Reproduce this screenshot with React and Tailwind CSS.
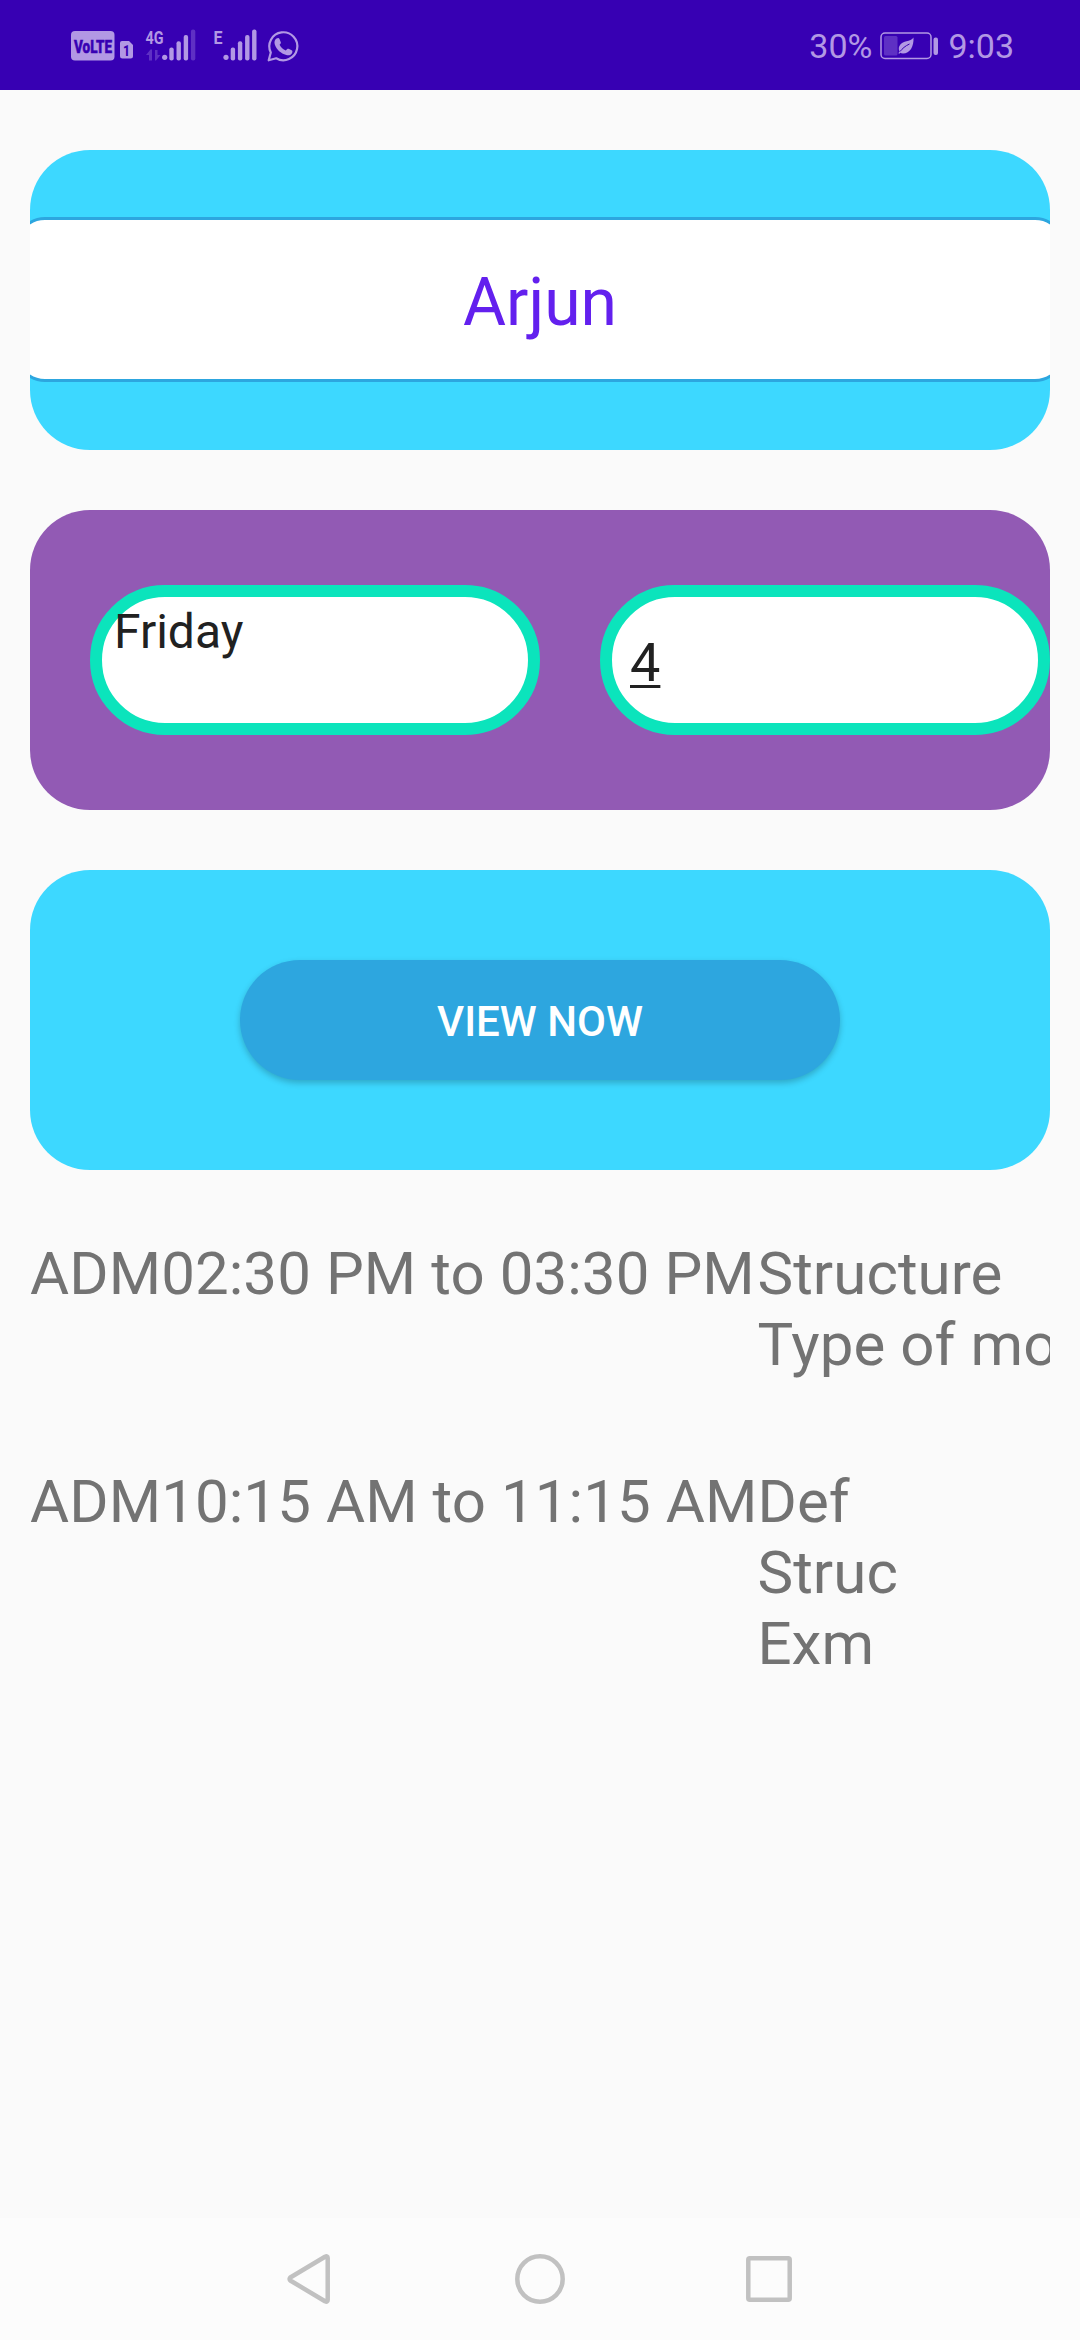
const sessions = [
  { subject: "ADM", time: "02:30 PM to 03:30 PM", topics: ["Structure", "Type of mo"] },
  { subject: "ADM", time: "10:15 AM to 11:15 AM", topics: ["Def", "Struc", "Exm"] },
];

function SignalIcons() {
  return (
    <svg width="270" height="80" viewBox="0 0 270 80" fill="#b298e4" className="block">
      <rect x="21" y="21" width="43.500" height="29.500" rx="4" />
      <text x="24" y="42.500" fontSize="18" fontWeight="800" fill="#3700b3" textLength="38" lengthAdjust="spacingAndGlyphs" stroke="#3700b3" strokeWidth="0.600">VoLTE</text>
      <path d="M72 31h7l4 4v11a2.500 2.500 0 0 1-2.500 2.500h-8a2.500 2.500 0 0 1-2.500-2.500V33a2 2 0 0 1 2-2z" />
      <text x="73" y="46" fontSize="15" fontWeight="800" fill="#3700b3" textLength="7" lengthAdjust="spacingAndGlyphs">1</text>
      <text x="95.500" y="33.500" fontSize="19" fontWeight="700" textLength="18" lengthAdjust="spacingAndGlyphs">4G</text>
      <path d="M96 45l4.500-5.500h1.500v11h-3V45zM105 40h2.500v5h3l-4.500 5.500h-1z" fill="#5e30c4" />
      <circle cx="114.700" cy="47.300" r="2.600" />
      <rect x="119.300" y="37.500" width="4.400" height="13" rx="2" />
      <rect x="126.500" y="31.300" width="4.400" height="19.200" rx="2" />
      <rect x="133.700" y="25" width="4.400" height="25.500" rx="2" />
      <rect x="140.900" y="19.500" width="4.400" height="31" rx="2" fill="#5e30c4" />
      <text x="163.500" y="33.500" fontSize="19" fontWeight="700" textLength="9" lengthAdjust="spacingAndGlyphs">E</text>
      <circle cx="176" cy="47.300" r="2.600" />
      <rect x="180.700" y="37.500" width="4.400" height="13" rx="2" />
      <rect x="187.900" y="31.300" width="4.400" height="19.200" rx="2" />
      <rect x="195.100" y="25" width="4.400" height="25.500" rx="2" />
      <rect x="202.100" y="19.500" width="4.400" height="31" rx="2" />
      <path d="M218.700 50.300l2.100-7.800a14 14 0 1 1 5.400 5.800z" fill="none" stroke="#b298e4" strokeWidth="2.200" strokeLinejoin="round" />
      <path d="M226.500 28.500c1.500-.9 2.600-.6 3.100.7l1.200 3c.3.800-.2 1.500-1.200 2.600 1.500 2.800 3.400 4.500 6.200 5.600 1.300-1.500 1.800-2.100 2.800-1.600l3 1.500c1.200.6 1 1.900.2 3.200-1 1.700-3.500 2.200-5.500 1.600-5.600-1.600-9.500-5.200-11.500-10.500-.8-2.400-.1-4.900 1.700-6.100z" />
    </svg>
  );
}

function BatteryIcon() {
  return (
    <svg width="60" height="28" viewBox="0 0 60 28" className="block">
      <rect x="1" y="1" width="50" height="25.500" rx="4" fill="none" stroke="#b298e4" strokeWidth="1.500" />
      <rect x="4" y="4" width="13.500" height="19.500" rx="1.500" fill="#5e30c4" />
      <path d="M33.500 5.500c.5 9-3.500 16-10.500 16-1.200 0-2-.3-2.800-.8l-1.200 1.300-.5-1 1-1.500c-2.500-5.500 2-9 7-10.200 3-.7 5.500-1.700 7-3.800z" fill="#b298e4" />
      <path d="M20 19.500c2.500-3 5-5.500 9.500-7.500" fill="none" stroke="#3700b3" strokeWidth="1" />
      <rect x="53.500" y="5.500" width="4.500" height="17.500" rx="2" fill="#b298e4" />
    </svg>
  );
}

function StatusBar() {
  return (
    <header className="flex h-[90px] shrink-0 justify-between bg-[#3700b3] text-[#b298e4]">
      <div className="ml-[50px] pt-[10px]">
        <SignalIcons />
      </div>
      <div className="mr-[66px] flex items-center pt-[2px] text-[34px] leading-none">
        <span className="mr-2">30%</span>
        <BatteryIcon />
        <span className="ml-2">9:03</span>
      </div>
    </header>
  );
}

function NavBar() {
  return (
    <nav className="h-[122px] shrink-0 bg-[#fcfcfc]">
      <svg width="1080" height="122" viewBox="0 0 1080 122" fill="none" stroke="#c1c1c1" strokeWidth="4.500" strokeLinejoin="round" className="block">
        <path d="M290.300 59.500Q289 61 290.300 62.500L325 83.300Q327.700 84.500 327.700 82V40Q327.700 37.500 325 38.700Z" />
        <circle cx="540" cy="61" r="22.700" />
        <rect x="748.300" y="40.300" width="41.400" height="41.400" rx="1.500" />
      </svg>
    </nav>
  );
}

export default function App() {
  return (
    <div className="flex h-[2340px] w-[1080px] flex-col overflow-hidden bg-[#fafafa] font-[Roboto,sans-serif]">
      <StatusBar />
      <main className="flex grow flex-col px-[30px] pt-[60px]">
        <section className="flex h-[300px] flex-col overflow-hidden rounded-[60px] bg-[#3dd8ff] pt-[67px]">
          <h1 className="-mx-[15px] flex h-[165px] items-center justify-center rounded-[30px] border-[3px] border-[#2da6df] bg-white pt-[6px] text-[66px] leading-none text-[#6320ee]">
            Arjun
          </h1>
        </section>

        <section className="mt-[60px] flex h-[300px] items-center gap-[60px] rounded-[60px] bg-[#925ab4] pl-[60px] text-[#212121]">
          <div className="h-[150px] w-[450px] rounded-[75px] border-[12px] border-[#0be4bc] bg-white pt-[6px] pl-[12px] text-[48px] leading-[57px]">
            Friday
          </div>
          <div className="h-[150px] w-[450px] rounded-[75px] border-[12px] border-[#0be4bc] bg-white pt-[34px] pl-[18px] text-[54px] leading-[63px]">
            <span className="underline decoration-[3px] underline-offset-[4px]">4</span>
          </div>
        </section>

        <section className="mt-[60px] flex h-[300px] items-center justify-center rounded-[60px] bg-[#3dd8ff]">
          <button className="h-[120px] w-[600px] rounded-[60px] bg-[#2da6df] pt-[3px] text-[42px] leading-none font-medium text-white shadow-[0_3px_6px_rgba(0,0,0,0.22)]">
            VIEW NOW
          </button>
        </section>

        <section className="mt-[68px] grid grid-cols-[max-content_max-content_1fr] gap-y-[86px] overflow-hidden text-[60px] leading-[71px] tracking-[0.08px] whitespace-nowrap text-[#737373]">
          {sessions.map((s) => (
            <div key={s.time} className="contents">
              <span>{s.subject}</span>
              <span>{s.time}</span>
              <div className="min-w-0">
                {s.topics.map((t) => (
                  <p key={t}>{t}</p>
                ))}
              </div>
            </div>
          ))}
        </section>
      </main>
      <NavBar />
    </div>
  );
}
